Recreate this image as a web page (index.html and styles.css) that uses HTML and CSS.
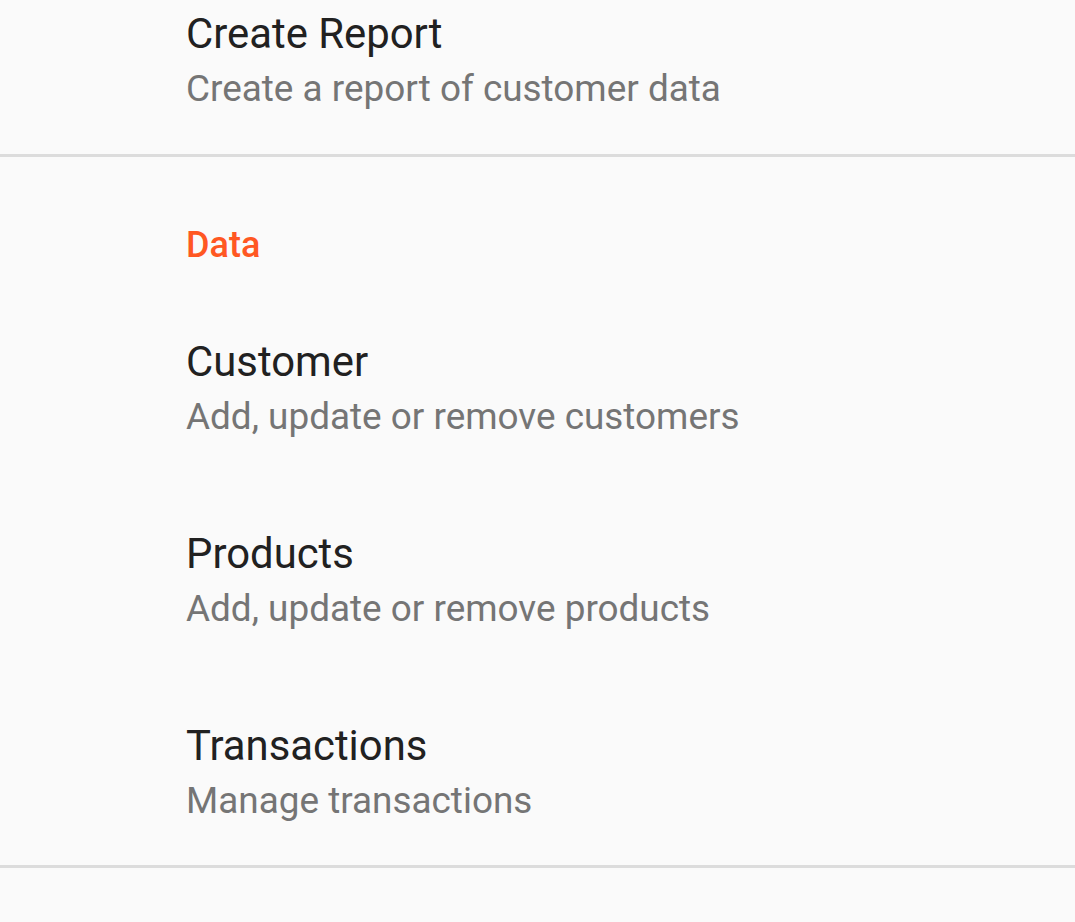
FILE: index.html
```html
<!DOCTYPE html>
<html>
<head>
<meta charset="utf-8">
<link rel="stylesheet" href="styles.css">
</head>
<body>
<div class="screen">
  <div class="pref first">
    <div class="title">Create Report</div>
    <div class="summary">Create a report of customer data</div>
  </div>
  <div class="divider"></div>
  <div class="category">Data</div>
  <div class="pref">
    <div class="title">Customer</div>
    <div class="summary">Add, update or remove customers</div>
  </div>
  <div class="pref">
    <div class="title">Products</div>
    <div class="summary">Add, update or remove products</div>
  </div>
  <div class="pref">
    <div class="title">Transactions</div>
    <div class="summary">Manage transactions</div>
  </div>
  <div class="divider"></div>
</div>
</body>
</html>
```

FILE: styles.css
```css
html, body {
  margin: 0;
  padding: 0;
  background: #fafafa;
}
.screen {
  display: flex;
  flex-direction: column;
  min-height: 922px;
  background: #fafafa;
  font-family: Roboto, "Noto Sans", sans-serif;
}
.pref {
  display: flex;
  flex-direction: column;
  gap: 8px;
  padding: 48px 24px 42px 186px;
}
.pref.first {
  padding-top: 9px;
  padding-bottom: 43px;
}
.title {
  font-size: 41.85px;
  line-height: 50px;
  color: #212121;
}
.summary {
  font-size: 36.9px;
  line-height: 44px;
  color: #757575;
}
.divider {
  height: 3px;
  background: #dcdcdc;
}
.category {
  padding: 66px 24px 22px 186px;
  font-size: 36px;
  line-height: 44px;
  font-weight: 500;
  color: #ff5722;
}
```
